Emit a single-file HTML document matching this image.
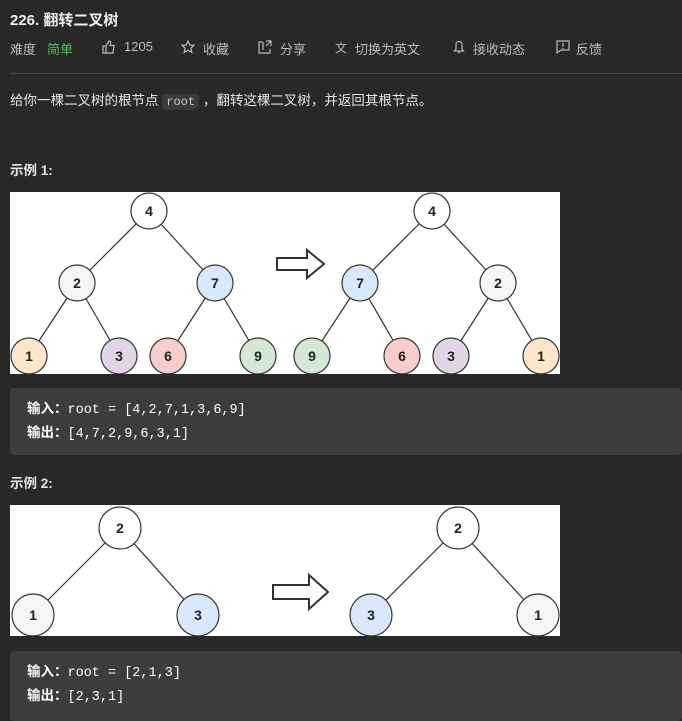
<!DOCTYPE html>
<html><head><meta charset="utf-8"><style>
body{margin:0;background:#282828;width:682px;height:716px;overflow:hidden;font-family:"Liberation Sans","Noto Sans CJK SC",sans-serif;color:#e6e6e6;position:relative}
.a{position:absolute;white-space:nowrap}
.t{left:10px;top:9px;font-size:15px;font-weight:bold;color:#eee}
.m{top:39px;font-size:13px;color:#bbb}
.ic{position:absolute;top:40px}
.hr{position:absolute;left:10px;right:0;top:73px;height:1px;background:#444}
.code{font-family:"Liberation Mono",monospace;font-size:12px;background:#3a3a3a;border-radius:3px;padding:1px 4px;color:#ccc}
.blk{position:absolute;left:10px;right:0;background:#3c3c3c;border-radius:4px}
.blk div{font-size:13.5px;color:#fff;line-height:22px;font-family:"Liberation Mono","Noto Sans CJK SC",monospace}
.blk b{font-family:"Liberation Sans","Noto Sans CJK SC",sans-serif}
svg text{font-family:"Liberation Sans",sans-serif;font-weight:bold;font-size:14px}
</style></head><body>
<div class="a t">226. 翻转二叉树</div>
<div class="a m" style="left:10px">难度</div>
<div class="a m" style="left:47px;color:#5cb85c">简单</div>
<svg class="ic" style="left:102px" width="14" height="14" viewBox="0 0 14 14" fill="none" stroke="#bbb" stroke-width="1.2"><path d="M1 6h3v7H1zM4 6l3-5c1.5 0 2 1 1.5 2.5L8 5.5h4l-1 7.5H4"/></svg>
<div class="a m" style="left:124px">1205</div>
<svg class="ic" style="left:181px" width="14" height="14" viewBox="0 0 14 14" fill="none" stroke="#bbb" stroke-width="1.2"><path d="M7 1l1.8 4 4.2.4-3.2 2.8 1 4.2L7 10.2 3.2 12.4l1-4.2L1 5.4l4.2-.4z"/></svg>
<div class="a m" style="left:203px">收藏</div>
<svg class="ic" style="left:258px" width="14" height="14" viewBox="0 0 14 14" fill="none" stroke="#bbb" stroke-width="1.2"><path d="M5 2H1v11h11V9M5 2v8M8 1h5v5M13 1L8 6"/></svg>
<div class="a m" style="left:280px">分享</div>
<div class="a m" style="left:335px;font-size:12px">文</div>
<div class="a m" style="left:355px">切换为英文</div>
<svg class="ic" style="left:453px" width="12" height="14" viewBox="0 0 12 14" fill="none" stroke="#bbb" stroke-width="1.2"><path d="M6 1.5c-2 0-3 1.5-3 3.5v4L1.5 11h9L9 9V5c0-2-1-3.5-3-3.5zM5 12.5h2"/></svg>
<div class="a m" style="left:473px">接收动态</div>
<svg class="ic" style="left:556px" width="14" height="14" viewBox="0 0 14 14" fill="none" stroke="#bbb" stroke-width="1.2"><path d="M1 1h12v9H5l-4 3zM7 3v4M7 8v1"/></svg>
<div class="a m" style="left:576px">反馈</div>
<div class="hr"></div>
<div class="a" style="left:10px;top:89px;font-size:13.5px">给你一棵二叉树的根节点 <span class="code">root</span> ，翻转这棵二叉树，并返回其根节点。</div>
<div class="a" style="left:10px;top:159px;font-size:13.5px;font-weight:bold">示例 1:</div>
<svg class="a" style="left:10px;top:192px" width="550" height="182" viewBox="10 192 550 182">
<rect x="10" y="192" width="550" height="182" fill="#fff"/>
<g stroke="#333" stroke-width="1.2" fill="none">
<line x1="149" y1="211" x2="77" y2="283"/><line x1="149" y1="211" x2="215" y2="283"/>
<line x1="77" y1="283" x2="29" y2="356"/><line x1="77" y1="283" x2="119" y2="356"/>
<line x1="215" y1="283" x2="168" y2="356"/><line x1="215" y1="283" x2="258" y2="356"/>
<line x1="432" y1="211" x2="360" y2="283"/><line x1="432" y1="211" x2="498" y2="283"/>
<line x1="360" y1="283" x2="312" y2="356"/><line x1="360" y1="283" x2="402" y2="356"/>
<line x1="498" y1="283" x2="451" y2="356"/><line x1="498" y1="283" x2="541" y2="356"/>
<path d="M277 258h30v-8l17 14-17 14v-8h-30z" stroke-width="2"/>
</g>
<g stroke="#333" stroke-width="1.2">
<circle cx="149" cy="211" r="18" fill="#fff"/><circle cx="77" cy="283" r="18" fill="#f5f5f5"/><circle cx="215" cy="283" r="18" fill="#dae8fc"/>
<circle cx="29" cy="356" r="18" fill="#ffe6cc"/><circle cx="119" cy="356" r="18" fill="#e1d5e7"/><circle cx="168" cy="356" r="18" fill="#f8cecc"/><circle cx="258" cy="356" r="18" fill="#d5e8d4"/>
<circle cx="432" cy="211" r="18" fill="#fff"/><circle cx="360" cy="283" r="18" fill="#dae8fc"/><circle cx="498" cy="283" r="18" fill="#f5f5f5"/>
<circle cx="312" cy="356" r="18" fill="#d5e8d4"/><circle cx="402" cy="356" r="18" fill="#f8cecc"/><circle cx="451" cy="356" r="18" fill="#e1d5e7"/><circle cx="541" cy="356" r="18" fill="#ffe6cc"/>
</g>
<g fill="#222" text-anchor="middle">
<text x="149" y="216">4</text><text x="77" y="288">2</text><text x="215" y="288">7</text><text x="29" y="361">1</text><text x="119" y="361">3</text><text x="168" y="361">6</text><text x="258" y="361">9</text>
<text x="432" y="216">4</text><text x="360" y="288">7</text><text x="498" y="288">2</text><text x="312" y="361">9</text><text x="402" y="361">6</text><text x="451" y="361">3</text><text x="541" y="361">1</text>
</g></svg>
<div class="blk" style="top:388px;height:67px"><div style="padding:10px 0 0 17px"><b>输入：</b>root = [4,2,7,1,3,6,9]<br><b>输出：</b>[4,7,2,9,6,3,1]</div></div>
<div class="a" style="left:10px;top:472px;font-size:13.5px;font-weight:bold">示例 2:</div>
<svg class="a" style="left:10px;top:505px" width="550" height="131" viewBox="10 505 550 131">
<rect x="10" y="505" width="550" height="131" fill="#fff"/>
<g stroke="#333" stroke-width="1.2" fill="none">
<line x1="120" y1="528" x2="33" y2="615"/><line x1="120" y1="528" x2="198" y2="615"/>
<line x1="458" y1="528" x2="371" y2="615"/><line x1="458" y1="528" x2="538" y2="615"/>
<path d="M273 585h36v-10l19 17-19 17v-10h-36z" stroke-width="2"/>
</g>
<g stroke="#333" stroke-width="1.2">
<circle cx="120" cy="528" r="21" fill="#fff"/><circle cx="33" cy="615" r="21" fill="#f5f5f5"/><circle cx="198" cy="615" r="21" fill="#dae8fc"/>
<circle cx="458" cy="528" r="21" fill="#fff"/><circle cx="371" cy="615" r="21" fill="#dae8fc"/><circle cx="538" cy="615" r="21" fill="#f5f5f5"/>
</g>
<g fill="#222" text-anchor="middle">
<text x="120" y="533">2</text><text x="33" y="620">1</text><text x="198" y="620">3</text><text x="458" y="533">2</text><text x="371" y="620">3</text><text x="538" y="620">1</text>
</g></svg>
<div class="blk" style="top:651px;height:70px"><div style="padding:10px 0 0 17px"><b>输入：</b>root = [2,1,3]<br><b>输出：</b>[2,3,1]</div></div>
</body></html>
